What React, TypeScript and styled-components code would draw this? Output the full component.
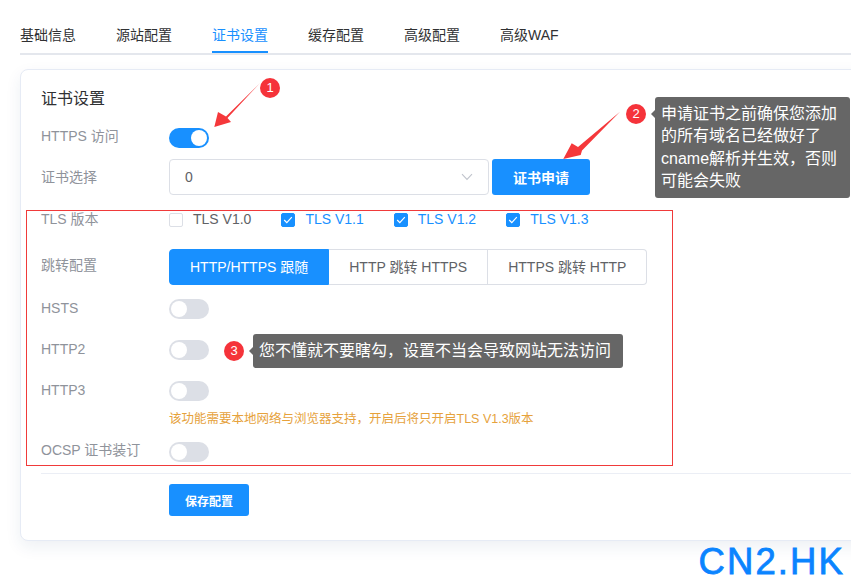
import React from "react";
import styled, { createGlobalStyle } from "styled-components";

const Global = createGlobalStyle`
  html, body { margin: 0; padding: 0; background: #fff; overflow: hidden; }
  body { font-family: "Liberation Sans", "Noto Sans CJK SC", sans-serif; font-size: 14px; color: #606266; }
  * { box-sizing: border-box; }
`;

const Page = styled.div`
  position: relative;
  width: 851px;
  height: 582px;
  overflow: hidden;
  padding: 0 0 0 20px;
`;
const Tabs = styled.nav`
  display: flex;
  gap: 40px;
  height: 55px;
  padding-top: 24px;
  border-bottom: 2px solid #e4e7ed;
`;
const Tab = styled.div<{ $active?: boolean }>`
  height: 29px;
  line-height: 22px;
  font-size: 14px;
  color: ${(p) => (p.$active ? "#1890ff" : "#303133")};
  border-bottom: 2px solid ${(p) => (p.$active ? "#1890ff" : "transparent")};
`;
const Card = styled.section`
  width: 900px;
  height: 472px;
  margin-top: 14px;
  padding: 18px 20px 0;
  border: 1px solid #e6ebf5;
  border-radius: 8px;
  background: #fff;
  box-shadow: 0 6px 16px rgba(30, 60, 120, 0.08);
`;
const Title = styled.h3`
  margin: 0;
  height: 22px;
  line-height: 22px;
  font-size: 16px;
  font-weight: 400;
  color: #303133;
`;
const Row = styled.div<{ $top: number; $h: number }>`
  display: flex;
  align-items: center;
  height: ${(p) => p.$h}px;
  margin-top: ${(p) => p.$top}px;
`;
const Label = styled.div<{ $lift?: number }>`
  width: 128px;
  flex: none;
  font-size: 14px;
  line-height: 16px;
  color: #8f939b;
  white-space: nowrap;
  margin-bottom: ${(p) => p.$lift ?? 0}px;
`;
const Switch = styled.span<{ $on?: boolean }>`
  display: block;
  position: relative;
  width: 40px;
  height: 20px;
  border-radius: 10px;
  background: ${(p) => (p.$on ? "#1890ff" : "#dcdfe6")};
  &::after {
    content: "";
    position: absolute;
    top: 2px;
    left: ${(p) => (p.$on ? 22 : 2)}px;
    width: 16px;
    height: 16px;
    border-radius: 50%;
    background: #fff;
  }
`;
const Select = styled.div`
  width: 320px;
  height: 36px;
  padding: 0 15px;
  display: flex;
  align-items: center;
  justify-content: space-between;
  border: 1px solid #dcdfe6;
  border-radius: 4px;
  color: #606266;
`;
const Primary = styled.button<{ $small?: boolean }>`
  height: ${(p) => (p.$small ? 32 : 36)}px;
  width: ${(p) => (p.$small ? 80 : 98)}px;
  padding: 0;
  border: 0;
  border-radius: 3px;
  background: #1890ff;
  color: #fff;
  font-family: inherit;
  font-size: ${(p) => (p.$small ? 12 : 14)}px;
  font-weight: ${(p) => (p.$small ? 700 : 600)};
  margin-left: ${(p) => (p.$small ? 0 : 3)}px;
`;
const CheckGroup = styled.div`
  display: flex;
  gap: 30px;
`;
const Check = styled.label<{ $on?: boolean }>`
  display: flex;
  align-items: center;
  gap: 10px;
  height: 14px;
  font-size: 14px;
  color: ${(p) => (p.$on ? "#1890ff" : "#606266")};
  & > span:last-child { margin-top: -2px; }
`;
const Box = styled.span<{ $on?: boolean }>`
  width: 14px;
  height: 14px;
  flex: none;
  display: flex;
  align-items: center;
  justify-content: center;
  border-radius: 2px;
  border: 1px solid ${(p) => (p.$on ? "#1890ff" : "#dcdfe6")};
  background: ${(p) => (p.$on ? "#1890ff" : "#fff")};
`;
const Segmented = styled.div`
  display: flex;
  height: 36px;
`;
const Segment = styled.div<{ $on?: boolean }>`
  padding: 0 20px;
  line-height: 34px;
  font-size: 14px;
  white-space: nowrap;
  color: ${(p) => (p.$on ? "#fff" : "#606266")};
  background: ${(p) => (p.$on ? "#1890ff" : "#fff")};
  border: 1px solid ${(p) => (p.$on ? "#1890ff" : "#dcdfe6")};
  border-left-width: ${(p) => (p.$on ? 1 : 0)}px;
  &:first-child { border-radius: 4px 0 0 4px; }
  &:last-child { border-radius: 0 4px 4px 0; }
`;
const Hint = styled.div`
  margin: 11px 0 0 128px;
  height: 14px;
  line-height: 14px;
  font-size: 12.5px;
  color: #e6a23c;
  white-space: nowrap;
`;
const Divider = styled.hr`
  margin: 11px 0 10px;
  height: 1px;
  border: 0;
  background: #ebeef5;
`;
const Footer = styled.div`
  padding-left: 128px;
`;
const RedFrame = styled.div`
  position: absolute;
  left: 26px;
  top: 210px;
  width: 647px;
  height: 256px;
  border: 1px solid #f03a3a;
  pointer-events: none;
`;
const Badge = styled.span<{ $x: number; $y: number }>`
  position: absolute;
  left: ${(p) => p.$x - 10}px;
  top: ${(p) => p.$y - 10}px;
  width: 20px;
  height: 20px;
  border-radius: 50%;
  background: #f5333a;
  color: #fff;
  font-size: 13px;
  line-height: 20px;
  text-align: center;
`;
const Tip = styled.div<{ $x: number; $y: number; $w: number }>`
  position: absolute;
  left: ${(p) => p.$x}px;
  top: ${(p) => p.$y}px;
  width: ${(p) => p.$w}px;
  padding: 6px;
  border-radius: 3px;
  background: #666;
  color: #fff;
  font-size: 16px;
  line-height: 22.3px;
  &::before {
    content: "";
    position: absolute;
    left: -4px;
    top: 13px;
    border: 4px solid transparent;
    border-left: 0;
    border-right-color: #666;
  }
`;
const ArrowLayer = styled.svg`
  position: absolute;
  left: 0;
  top: 0;
  pointer-events: none;
`;
const Brand = styled.div`
  position: absolute;
  right: 6px;
  bottom: 2px;
  font-family: "Liberation Sans", sans-serif;
  font-size: 36.5px;
  line-height: 36px;
  font-weight: 400;
  letter-spacing: 2.1px;
  -webkit-text-stroke: 0.8px #0a84ff;
  color: #0a84ff;
`;

const Tick = () => (
  <svg width="10" height="8" viewBox="0 0 10 8" fill="none">
    <path d="M1.2 4 L3.8 6.6 L8.8 1.2" stroke="#fff" strokeWidth="1.2" />
  </svg>
);
const Chevron = () => (
  <svg width="12" height="8" viewBox="0 0 12 8" fill="none">
    <path d="M1 1.2 L6 6.4 L11 1.2" stroke="#c0c4cc" strokeWidth="1.1" />
  </svg>
);

const tabs = ["基础信息", "源站配置", "证书设置", "缓存配置", "高级配置", "高级WAF"];
const tls = [
  { t: "TLS V1.0", on: false },
  { t: "TLS V1.1", on: true },
  { t: "TLS V1.2", on: true },
  { t: "TLS V1.3", on: true },
];

export default function App() {
  return (
    <Page>
      <Global />
      <Tabs>
        {tabs.map((t) => (
          <Tab key={t} $active={t === "证书设置"}>{t}</Tab>
        ))}
      </Tabs>
      <Card>
        <Title>证书设置</Title>
        <Row $top={18} $h={20}>
          <Label $lift={4}>HTTPS 访问</Label>
          <Switch $on />
        </Row>
        <Row $top={11} $h={36}>
          <Label>证书选择</Label>
          <Select>
            <span>0</span>
            <Chevron />
          </Select>
          <Primary>证书申请</Primary>
        </Row>
        <Row $top={18} $h={14}>
          <Label $lift={2}>TLS 版本</Label>
          <CheckGroup>
            {tls.map((c) => (
              <Check key={c.t} $on={c.on}>
                <Box $on={c.on}>{c.on && <Tick />}</Box>
                <span>{c.t}</span>
              </Check>
            ))}
          </CheckGroup>
        </Row>
        <Row $top={22} $h={36}>
          <Label $lift={4}>跳转配置</Label>
          <Segmented>
            <Segment $on>HTTP/HTTPS 跟随</Segment>
            <Segment>HTTP 跳转 HTTPS</Segment>
            <Segment>HTTPS 跳转 HTTP</Segment>
          </Segmented>
        </Row>
        <Row $top={14} $h={20}>
          <Label $lift={2}>HSTS</Label>
          <Switch />
        </Row>
        <Row $top={21} $h={20}>
          <Label $lift={2}>HTTP2</Label>
          <Switch />
        </Row>
        <Row $top={21} $h={20}>
          <Label $lift={2}>HTTP3</Label>
          <Switch />
        </Row>
        <Hint>该功能需要本地网络与浏览器支持，开启后将只开启TLS V1.3版本</Hint>
        <Row $top={16} $h={20}>
          <Label $lift={4}>OCSP 证书装订</Label>
          <Switch />
        </Row>
        <Divider />
        <Footer>
          <Primary $small>保存配置</Primary>
        </Footer>
      </Card>

      <RedFrame />
      <ArrowLayer width="851" height="582" viewBox="0 0 851 582">
        <polygon fill="#f5383b" points="260,83 226,116.5 218,112 214.3,127 231,122 227.5,118" />
        <polygon fill="#f5383b" points="620,111.7 578,147 571.7,143.3 563.3,159 580.7,155 582,150.5" />
      </ArrowLayer>
      <Badge $x={270} $y={88}>1</Badge>
      <Badge $x={636} $y={114}>2</Badge>
      <Badge $x={234} $y={351}>3</Badge>
      <Tip $x={655} $y={97} $w={195}>申请证书之前确保您添加的所有域名已经做好了cname解析并生效，否则可能会失败</Tip>
      <Tip $x={253} $y={334} $w={370}>您不懂就不要瞎勾，设置不当会导致网站无法访问</Tip>
      <Brand>CN2.HK</Brand>
    </Page>
  );
}
